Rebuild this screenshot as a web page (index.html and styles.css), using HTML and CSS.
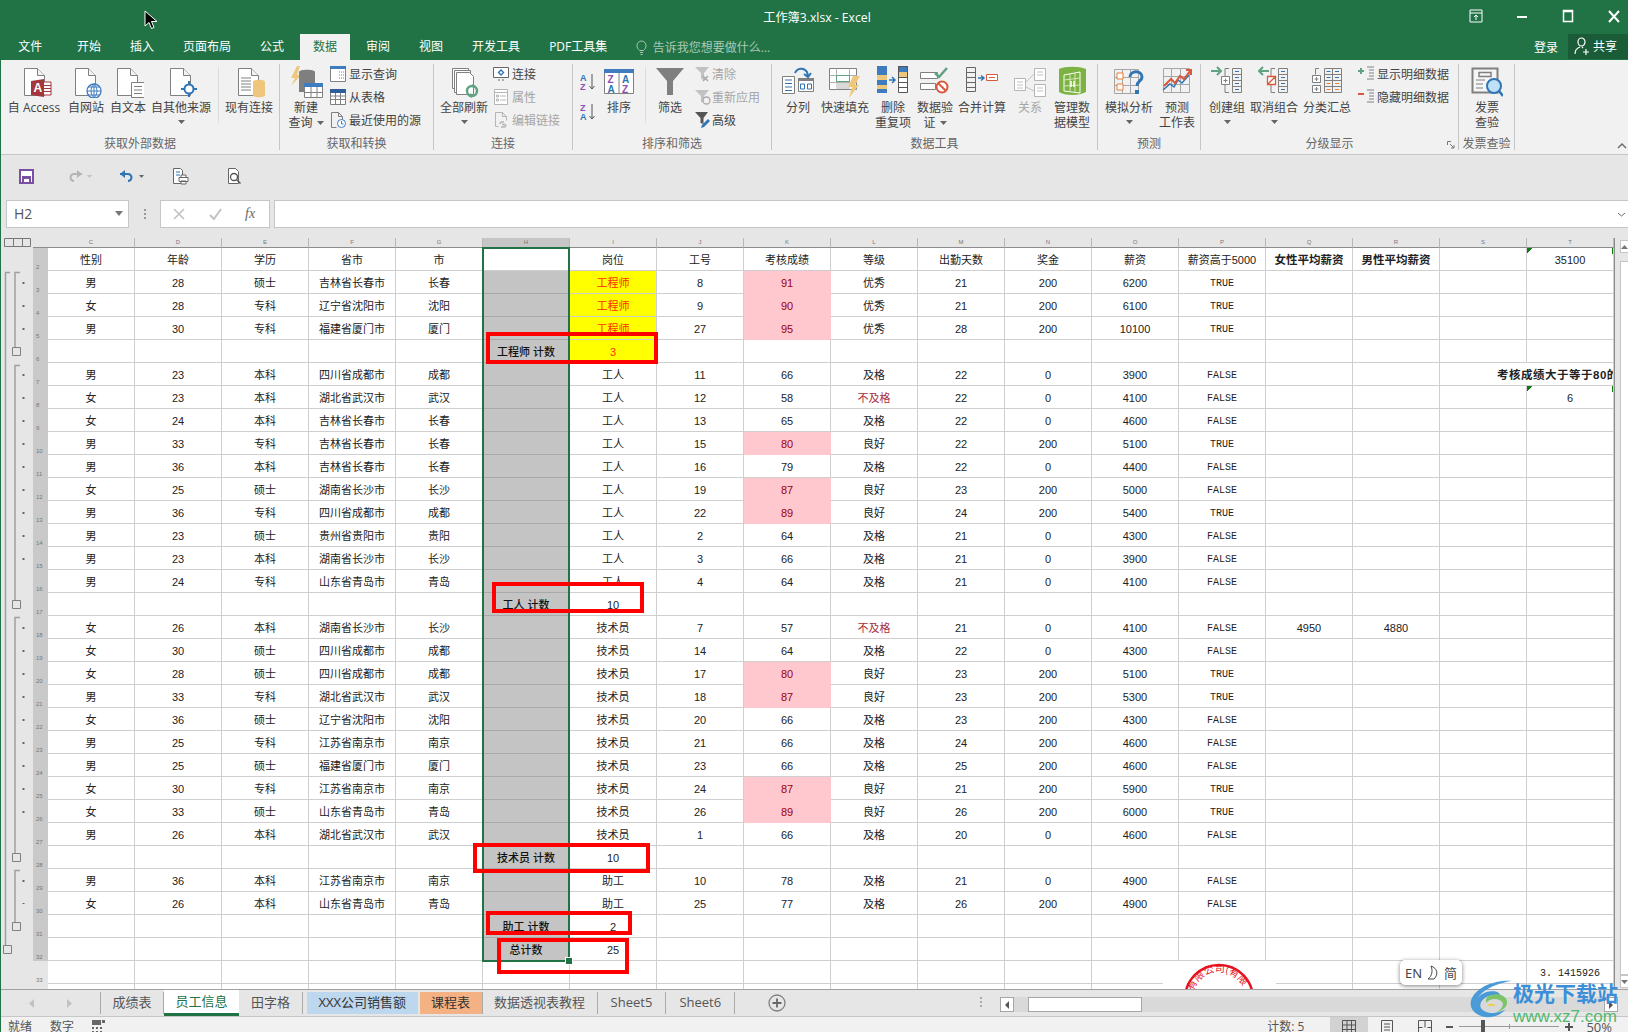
FILE: index.html
```html
<!DOCTYPE html>
<html lang="zh-CN">
<head>
    <meta charset="UTF-8">
    <title>工作簿3.xlsx - Excel</title>
    <link rel="stylesheet" href="styles.css">
</head>
<body>
<svg class="defs" width="0" height="0">
    <symbol id="doc" viewBox="0 0 21 28"><path d="M.5.5h13l7 7v20H.5z" fill="#fff" stroke="#808080"/><path d="M13.5.5v7h7" fill="#f2f2f2" stroke="#808080"/></symbol>
    <symbol id="caret" viewBox="0 0 7 4"><path d="M0 0h7L3.500 4z" fill="#666"/></symbol>
</svg>
<div class="app">
    <div class="titlebar">
        <div></div>
        <div class="title">工作簿3.xlsx - Excel</div>
        <div class="winctl">
            <svg width="14" height="14" viewBox="0 0 14 14"><path d="M1 1h12v12H1zM1 4h12M7 11V6M5 8l2-2 2 2" fill="none" stroke="#fff"/></svg>
            <svg width="14" height="14" viewBox="0 0 14 14"><path d="M2 8h10" stroke="#fff" stroke-width="2"/></svg>
            <svg width="14" height="14" viewBox="0 0 14 14"><path d="M2.500 1.500h9v11h-9zM2.500 2.500h9" fill="none" stroke="#fff" stroke-width="1.500"/></svg>
            <svg width="14" height="14" viewBox="0 0 14 14"><path d="M2 2l10 11M12 2L2 13" stroke="#fff" stroke-width="2"/></svg>
        </div>
    </div>
    <div class="tabs">
        <div class="tab tab-file">文件</div>
        <div class="tab">开始</div>
        <div class="tab">插入</div>
        <div class="tab">页面布局</div>
        <div class="tab">公式</div>
        <div class="tab active">数据</div>
        <div class="tab">审阅</div>
        <div class="tab">视图</div>
        <div class="tab">开发工具</div>
        <div class="tab">PDF工具集</div>
        <div class="tell">
            <svg width="11" height="15" viewBox="0 0 11 15"><path d="M3.500 10.500C2 9 1 8 1 5.500a4.500 4.500 0 0 1 9 0C10 8 9 9 7.500 10.500zM4 12.500h3M4.500 14.500h2" fill="none" stroke="#a9c9b6"/></svg>
            告诉我您想要做什么...
        </div>
        <div class="login">登录</div>
        <div class="share">
            <svg width="16" height="18" viewBox="0 0 16 18"><path d="M4 5a3.500 4 0 1 1 7 0 3.500 4 0 0 1-7 0zM1 17c0-4 2-6 5-7M8 10l1 1M9 15h6M12 12v6" fill="none" stroke="#fff" stroke-width="1.200"/></svg>
            共享
        </div>
    </div>

    <div class="ribbon">
        <div class="rb-group">
            <div class="rb-body pl3">
                <div class="rb-btn w60">
                    <svg class="rb-icon" width="36" height="32" viewBox="0 0 36 32"><use href="#doc" x="8" y="2" width="21" height="28"/><path d="M26 16h9v13h-9z" fill="#fff" stroke="#a4373a"/><path d="M26 19.500h9M26 22.500h9M26 25.500h9" stroke="#a4373a"/><path d="M15 15l13-2v18l-13-2z" fill="#a4373a"/><text x="17.500" y="26" class="svg-a">A</text></svg>
                    <span>自 Access</span>
                </div>
                <div class="rb-btn w44">
                    <svg class="rb-icon" width="32" height="32" viewBox="0 0 32 32"><use href="#doc" x="5" y="2" width="21" height="28"/><circle cx="24" cy="25" r="7" fill="#fff" stroke="#3f7cbf" stroke-width="1.300"/><path d="M17 25h14M24 18v14M18.500 21h11M18.500 29h11M24 18c-4 4-4 10 0 14M24 18c4 4 4 10 0 14" fill="none" stroke="#3f7cbf"/></svg>
                    <span>自网站</span>
                </div>
                <div class="rb-btn w40">
                    <svg class="rb-icon" width="32" height="32" viewBox="0 0 32 32"><use href="#doc" x="5" y="2" width="21" height="28"/><path d="M19.500 16.500h13v15h-13z" fill="#fff" stroke="#808080"/><path d="M22 20.500h8M22 24h8M22 27.500h8" stroke="#808080"/></svg>
                    <span>自文本</span>
                </div>
                <div class="rb-btn w66">
                    <svg class="rb-icon" width="32" height="32" viewBox="0 0 32 32"><use href="#doc" x="5" y="2" width="21" height="28"/><circle cx="24" cy="23" r="4.500" fill="#fff" stroke="#2f75b5" stroke-width="2"/><path d="M24 15v4M24 27v4M16 23h4M28 23h4" stroke="#2f75b5" stroke-width="2"/></svg>
                    <span>自其他来源</span>
                    <svg class="rb-caret" width="7" height="4"><use href="#caret"/></svg>
                </div>
                <div class="rb-sep"></div>
                <div class="rb-btn w60">
                    <svg class="rb-icon" width="32" height="32" viewBox="0 0 32 32"><use href="#doc" x="5" y="2" width="21" height="28"/><path d="M8 12h10M8 15h10M8 18h10M8 21h10M8 24h10" stroke="#808080"/><path d="M20 16c0-3 12-3 12 0v13c0 3-12 3-12 0z" fill="#efc77c"/></svg>
                    <span>现有连接</span>
                </div>
            </div>
            <div class="rb-title">获取外部数据</div>
        </div>

        <div class="rb-group">
            <div class="rb-body pl2">
                <div class="rb-btn w48">
                    <svg class="rb-icon" width="34" height="32" viewBox="0 0 34 32"><path d="M8 0L2 12h4L2 20l10-11H8l3-9z" fill="#efc77c"/><path d="M10 6c0-3 16-3 16 0v20H10z" fill="#7f7f7f"/><path d="M15.500 17.500h18v14h-18z" fill="#fff" stroke="#808080"/><path d="M15 17h19v4H15z" fill="#3f7cbf"/><path d="M15.500 26.500h18M22 21v10M28 21v10" stroke="#808080"/></svg>
                    <span>新建</span>
                    <span>查询<svg class="cap" width="7" height="4"><use href="#caret"/></svg></span>
                </div>
                <div class="rb-col w103">
                    <div class="rb-row"><svg width="16" height="16" viewBox="0 0 16 16"><path d="M.5.500h15v15H.5z" fill="#fff" stroke="#808080"/><path d="M0 0h16v3H0z" fill="#3f7cbf"/><path d="M9 6h5M9 9h5M9 12h5" stroke="#808080" stroke-dasharray="1 1"/></svg>显示查询</div>
                    <div class="rb-row"><svg width="16" height="16" viewBox="0 0 16 16"><path d="M.5.500h15v15H.5z" fill="#fff" stroke="#808080"/><path d="M0 0h16v4H0z" fill="#2f5f99"/><path d="M1 7h14M1 10.500h14M5.500 4v11M10.500 4v11" stroke="#808080"/></svg>从表格</div>
                    <div class="rb-row"><svg width="16" height="16" viewBox="0 0 16 16"><path d="M1.500.500h7l4 4v5M1.500.500v15h5M8.500.500v4h4" fill="none" stroke="#808080"/><circle cx="11.500" cy="11.500" r="4" fill="#fff" stroke="#3f7cbf"/><path d="M11.500 9v3h2" fill="none" stroke="#3f7cbf"/></svg>最近使用的源</div>
                </div>
            </div>
            <div class="rb-title">获取和转换</div>
        </div>

        <div class="rb-group">
            <div class="rb-body pl1">
                <div class="rb-btn w58">
                    <svg class="rb-icon" width="32" height="32" viewBox="0 0 32 32"><path d="M4.500 2.500h16v20h-16z" fill="#fff" stroke="#808080"/><path d="M6.500 4.500h16v22h-16z" fill="#fff" stroke="#808080"/><path d="M8.500 6.500h13l4 4v18h-17z" fill="#fff" stroke="#808080"/><circle cx="24" cy="25" r="5" fill="none" stroke="#5fa383" stroke-width="2.500"/><path d="M24 18l4 2-3 3zM24 32l-4-2 3-3z" fill="#5fa383"/></svg>
                    <span>全部刷新</span>
                    <svg class="rb-caret" width="7" height="4"><use href="#caret"/></svg>
                </div>
                <div class="rb-col w79">
                    <div class="rb-row"><svg width="16" height="16" viewBox="0 0 16 16"><path d="M.5 1.500h15v10H.5z" fill="#fff" stroke="#666"/><path d="M8 4l2.500 2.500L8 9 5.500 6.500z" fill="none" stroke="#2f75b5" stroke-width="1.400"/><path d="M5 14h2M9 14h2" stroke="#666"/></svg>连接</div>
                    <div class="rb-row off"><svg width="16" height="16" viewBox="0 0 16 16"><path d="M1.500.500h13v15h-13z" fill="#fff" stroke="#b5b5b5"/><path d="M1 3.500h14M7 7h6M7 11h6M3.500 6h2v2h-2zM3.500 10h2v2h-2z" fill="none" stroke="#b5b5b5"/></svg>属性</div>
                    <div class="rb-row off"><svg width="16" height="16" viewBox="0 0 16 16"><path d="M2.500.500h7l4 4v4M2.500.500v14h3M9.500.500v4h4" fill="none" stroke="#b5b5b5"/><path d="M7 12a2 2 0 0 1 2-2h2M8 15h3a2 2 0 0 0 2-2M9 12.500h4" fill="none" stroke="#b5b5b5" stroke-width="1.300"/></svg>编辑链接</div>
                </div>
            </div>
            <div class="rb-title">连接</div>
        </div>

        <div class="rb-group">
            <div class="rb-body pl1">
                <div class="rb-sort">
                    <svg width="16" height="18" viewBox="0 0 16 18"><text x="0" y="8" class="svg-l blue">A</text><text x="0" y="17" class="svg-l violet">Z</text><path d="M12 1v15M9.500 13l2.500 3 2.500-3" fill="none" stroke="#555"/></svg>
                    <svg width="16" height="18" viewBox="0 0 16 18"><text x="0" y="8" class="svg-l violet">Z</text><text x="0" y="17" class="svg-l blue">A</text><path d="M12 1v15M9.500 13l2.500 3 2.500-3" fill="none" stroke="#555"/></svg>
                </div>
                <div class="rb-btn w34">
                    <svg class="rb-icon" width="30" height="32" viewBox="0 0 30 32"><path d="M.5 3.500h29v24H.5z" fill="#fff" stroke="#808080"/><path d="M0 3h30v4H0z" fill="#3f7cbf"/><path d="M15 7v21" stroke="#808080"/><text x="3.500" y="17" class="svg-m violet">Z</text><text x="18" y="17" class="svg-m blue">A</text><text x="3.500" y="27" class="svg-m blue">A</text><text x="18" y="27" class="svg-m violet">Z</text></svg>
                    <span>排序</span>
                </div>
                <div class="rb-sep ml9"></div>
                <div class="rb-btn w48">
                    <svg class="rb-icon" width="30" height="32" viewBox="0 0 30 32"><path d="M1 2h28L18 15v14h-6V15z" fill="#7f7f7f"/></svg>
                    <span>筛选</span>
                </div>
                <div class="rb-col w77">
                    <div class="rb-row off tight"><svg width="18" height="18" viewBox="0 0 18 18"><path d="M1 2h14L10 8v7l-3-1V8z" fill="#c2c2c2"/><path d="M9 11l5 5M14 11l-5 5" stroke="#a8a8a8" stroke-width="1.500"/></svg>清除</div>
                    <div class="rb-row off tight"><svg width="18" height="18" viewBox="0 0 18 18"><path d="M1 2h14L10 8v7l-3-1V8z" fill="#c2c2c2"/><circle cx="12.500" cy="12.500" r="3.500" fill="#f1f1f1" stroke="#a8a8a8" stroke-width="1.300"/></svg>重新应用</div>
                    <div class="rb-row tight"><svg width="18" height="18" viewBox="0 0 18 18"><path d="M1 1h13L9.500 7v6l-3-1V7z" fill="#555"/><path d="M7 17l1-3 6-6 2 2-6 6z" fill="#2f75b5"/></svg>高级</div>
                </div>
            </div>
            <div class="rb-title">排序和筛选</div>
        </div>

        <div class="rb-group">
            <div class="rb-body pl1">
                <div class="rb-btn w50">
                    <svg class="rb-icon" width="32" height="32" viewBox="0 0 32 32"><path d="M.5 10.500h12v17H.5z" fill="#fff" stroke="#808080"/><path d="M3 14h7M3 17.500h7M3 21h7M3 24.500h7" stroke="#2f75b5"/><path d="M16.500 12.500h15v13h-15z" fill="#fff" stroke="#808080"/><path d="M16 12h16v3H16z" fill="#808080"/><path d="M18.500 18h4v5h-4zM25.500 18h4v5h-4z" fill="none" stroke="#2f75b5"/><path d="M13 7c2-5 9-6 12-1l1 4M22 8l4 3 3-4" fill="none" stroke="#2f75b5" stroke-width="2"/></svg>
                    <span>分列</span>
                </div>
                <div class="rb-btn w44">
                    <svg class="rb-icon" width="32" height="32" viewBox="0 0 32 32"><path d="M.5 2.500h27v21H.5z" fill="#fff" stroke="#808080"/><path d="M.5 9.500h27M.5 16.500h27M7.500 2.500v21M20.500 2.500v21" stroke="#b0b0b0"/><path d="M7.500 9.500h13v6h-13z" fill="#fff" stroke="#5fa383"/><path d="M7 17h14v6H7z" fill="#d9d9d9"/><path d="M24 10h7l-5 9h4L20 32l3-11h-4z" fill="#efc77c"/></svg>
                    <span>快速填充</span>
                </div>
                <div class="rb-btn w52">
                    <svg class="rb-icon" width="32" height="32" viewBox="0 0 32 32"><path d="M0 0h10v27H0z" fill="#3f7cbf"/><path d="M0 9h10v5H0zM0 19h10v4H0z" fill="#efc77c"/><path d="M21 0h10v27H21z" fill="#fff"/><path d="M21 0h10v6H21z" fill="#3f7cbf"/><path d="M21 6h10v5H21z" fill="#efc77c"/><path d="M21.500.5h9v26h-9zM21.500 11.500h9M21.500 16.500h9M21.500 21.500h9" fill="none" stroke="#555"/><path d="M12 14h5M15 11l3 3-3 3" fill="none" stroke="#2f75b5" stroke-width="1.500"/></svg>
                    <span>删除</span><span>重复项</span>
                </div>
                <div class="rb-btn w32">
                    <svg class="rb-icon" width="30" height="32" viewBox="0 0 30 32"><path d="M.5 6.500h17v6H.5zM.5 17.500h15v6H.5z" fill="#fff" stroke="#808080"/><path d="M15 7l4 4 8-9" fill="none" stroke="#5fa383" stroke-width="2.500"/><circle cx="22" cy="21" r="5.500" fill="#fff" stroke="#d9593d" stroke-width="2"/><path d="M18 17l8 8" stroke="#d9593d" stroke-width="2"/></svg>
                    <span>数据验</span><span>证<svg class="cap" width="7" height="4"><use href="#caret"/></svg></span>
                </div>
                <div class="rb-btn w62">
                    <svg class="rb-icon" width="32" height="32" viewBox="0 0 32 32"><path d="M.5 1.500h9v24h-9zM.5 6.500h9M.5 11.500h9M.5 16.500h9M.5 21.500h9" fill="none" stroke="#666"/><path d="M12 12h5M15 9.500l3 2.500-3 2.500" fill="none" stroke="#2f75b5" stroke-width="1.500"/><path d="M20.500 8.500h11v6h-11z" fill="#fff" stroke="#d9593d"/><path d="M23 11.500h6" stroke="#d9593d"/></svg>
                    <span>合并计算</span>
                </div>
                <div class="rb-btn w34 off">
                    <svg class="rb-icon" width="32" height="32" viewBox="0 0 32 32"><path d="M.5 12.500h11v12H.5zM20.500 2.500h11v12h-11zM20.500 18.500h11v12h-11z" fill="#fff" stroke="#b5b5b5"/><path d="M12 16l8-8M12 21l8 4M3 16h6M3 19h6M3 22h6M23 6h6M23 9h6M23 22h6M23 25h6" stroke="#c2c2c2"/></svg>
                    <span>关系</span>
                </div>
                <div class="rb-btn w50">
                    <svg class="rb-icon" width="32" height="32" viewBox="0 0 32 32"><path d="M3 3c6-3 20-3 27 0v23c-7 4-21 4-27 0z" fill="#7cb342"/><path d="M8 9l16-3v21L8 25z" fill="none" stroke="#fff"/><path d="M14 8v18M19 7v20M8 14l16-2M8 20l16-1" stroke="#d5e8b8"/><path d="M15 21v-6M18 15v6" stroke="#fff" stroke-width="1.500"/></svg>
                    <span>管理数</span><span>据模型</span>
                </div>
            </div>
            <div class="rb-title">数据工具</div>
        </div>

        <div class="rb-group">
            <div class="rb-body pl1 pr5">
                <div class="rb-btn w60">
                    <svg class="rb-icon" width="32" height="32" viewBox="0 0 32 32"><path d="M1.500 3.500h24v24h-24zM1.500 11.500h24M1.500 19.500h24M9.500 3.500v24M17.500 3.500v24" fill="none" stroke="#a6a6a6"/><path d="M4 7h6v6H4zM4 18h6v6H4z" fill="#fff" stroke="#ed7d31"/><path d="M17 11c0-7 12-7 12 0 0 4-5 4-5 9" fill="none" stroke="#2f75b5" stroke-width="3"/><path d="M22 24h4v4h-4z" fill="#2f75b5"/></svg>
                    <span>模拟分析</span>
                    <svg class="rb-caret" width="7" height="4"><use href="#caret"/></svg>
                </div>
                <div class="rb-btn w36">
                    <svg class="rb-icon" width="30" height="32" viewBox="0 0 30 32"><path d="M1.500 2.500h26v24h-26zM1.500 10.500h26M1.500 18.500h26M9.500 2.500v24M18.500 2.500v24" fill="none" stroke="#a6a6a6"/><path d="M1 24l7-6 4 3 4-7 4 3 7-8" fill="none" stroke="#2f75b5" stroke-width="1.500"/><path d="M2 20l7-7 4 4 5-7 4 3 6-8M24 4h5v5" fill="none" stroke="#d9593d" stroke-width="2"/></svg>
                    <span>预测</span><span>工作表</span>
                </div>
            </div>
            <div class="rb-title">预测</div>
        </div>

        <div class="rb-group has-launcher">
            <div class="rb-body pl1">
                <div class="rb-btn w50">
                    <svg class="rb-icon" width="32" height="32" viewBox="0 0 32 32"><path d="M0 5h9M6 1l4 4-4 4" fill="none" stroke="#5fa383" stroke-width="2"/><path d="M21.500 2.500h9v24h-9zM21.500 8.500h9M21.500 14.500h9M21.500 20.500h9" fill="none" stroke="#808080"/><path d="M24 5.500h4M24 11.500h4M24 17.500h4M24 23.500h4" stroke="#2f75b5"/><path d="M18 2.500h-4v8M18 26.500h-4v-8" fill="none" stroke="#808080"/><path d="M10.500 10.500h8v8h-8zM12.500 14.500h4M14.500 12.500v4" fill="#fff" stroke="#808080"/></svg>
                    <span>创建组</span>
                    <svg class="rb-caret" width="7" height="4"><use href="#caret"/></svg>
                </div>
                <div class="rb-btn w44">
                    <svg class="rb-icon" width="32" height="32" viewBox="0 0 32 32"><path d="M11 5H2M5 1L1 5l4 4" fill="none" stroke="#5fa383" stroke-width="2"/><path d="M20.500 2.500h9v24h-9zM20.500 8.500h9M20.500 14.500h9M20.500 20.500h9" fill="none" stroke="#808080"/><path d="M23 5.500h4M23 11.500h4M23 17.500h4M23 23.500h4" stroke="#2f75b5"/><path d="M17 2.500h-4v8M17 26.500h-4v-8" fill="none" stroke="#808080"/><path d="M9.500 10.500h8v8h-8zM10 18l7-7" fill="#fff" stroke="#d9593d" stroke-width="1.300"/></svg>
                    <span>取消组合</span>
                    <svg class="rb-caret" width="7" height="4"><use href="#caret"/></svg>
                </div>
                <div class="rb-btn w62">
                    <svg class="rb-icon" width="32" height="32" viewBox="0 0 32 32"><path d="M13.500 2.500h17v24h-17zM13.500 8.500h17M13.500 14.500h17M13.500 20.500h17M21.500 2.500v24" fill="none" stroke="#808080"/><path d="M15.500 11.500h4M24 11.500h4M15.500 5.500h4M24 5.500h4" stroke="#2f75b5"/><path d="M15.500 17.500h4M24 17.500h4M15.500 23.500h4M24 23.500h4" stroke="#ed7d31"/><path d="M8 2.500H4.500v6M4.500 19v7.500" fill="none" stroke="#808080"/><path d="M1.500 9.500h8v7h-8zM1.500 19.500h8v7h-8zM3.500 13h4M5.500 11v4M3.500 23h4M5.500 21v4" fill="#fff" stroke="#808080"/></svg>
                    <span>分类汇总</span>
                </div>
                <div class="rb-col w100">
                    <div class="rb-row"><svg width="16" height="16" viewBox="0 0 16 16"><path d="M0 5h6M3 2v6" stroke="#5fa383" stroke-width="2"/><path d="M9 1h7M11 4h5M11 7h5M11 10h5M9 13h7" stroke="#808080"/></svg>显示明细数据</div>
                    <div class="rb-row"><svg width="16" height="16" viewBox="0 0 16 16"><path d="M0 5h6" stroke="#d9593d" stroke-width="2"/><path d="M9 1h7M11 4h5M11 7h5M11 10h5M9 13h7" stroke="#808080"/></svg>隐藏明细数据</div>
                </div>
            </div>
            <div class="rb-title">分级显示</div>
            <svg class="launcher" width="8" height="8" viewBox="0 0 8 8"><path d="M.5 4V.5H4M3 3l4 4M7 4v3H4" fill="none" stroke="#777"/></svg>
        </div>

        <div class="rb-group">
            <div class="rb-body pl1">
                <div class="rb-btn w54">
                    <svg class="rb-icon" width="32" height="32" viewBox="0 0 32 32"><path d="M1.500 2.500h25v24h-25z" fill="#f5f5f5" stroke="#808080" stroke-width="2"/><path d="M8 6.500h12v4H8z" fill="none" stroke="#808080" stroke-width="1.500"/><path d="M5 14h9M5 18h7M5 22h7" stroke="#808080"/><circle cx="23" cy="20" r="7" fill="#bfe0f5" stroke="#2f75b5" stroke-width="2"/><path d="M28 25l4 5" stroke="#2f75b5" stroke-width="2.500"/></svg>
                    <span>发票</span><span>查验</span>
                </div>
            </div>
            <div class="rb-title">发票查验</div>
        </div>
        <svg class="collapse" width="10" height="6" viewBox="0 0 10 6"><path d="M1 5l4-4 4 4" fill="none" stroke="#666" stroke-width="1.300"/></svg>
    </div>

    <div class="qat">
        <svg class="q-save" width="15" height="15" viewBox="0 0 15 15"><path d="M1 1h13v13H1z" fill="#fff" stroke="#7b4fa3" stroke-width="2"/><path d="M3 7h9v7H3z" fill="#7b4fa3"/><path d="M5 10h5v3H5z" fill="#fff"/></svg>
        <svg class="q-redo" width="24" height="14" viewBox="0 0 24 14"><path d="M14 5H6a3 3 0 0 0 0 7" fill="none" stroke="#b5b5b5" stroke-width="2"/><path d="M9 1l5 4-5 4z" fill="#b5b5b5"/><path d="M19 6h5l-2.500 3z" fill="#c2c2c2"/></svg>
        <svg class="q-undo" width="26" height="14" viewBox="0 0 26 14"><path d="M2 5h8a3 3 0 0 1 0 7" fill="none" stroke="#2f75b5" stroke-width="2"/><path d="M7 1L2 5l5 4z" fill="#2f75b5"/><path d="M21 6h5l-2.500 3z" fill="#666"/></svg>
        <svg class="q-prev" width="17" height="17" viewBox="0 0 17 17"><path d="M1.500.500h7l2 2v13h-9z" fill="#fff" stroke="#666"/><path d="M4 4h4M4 7h4" stroke="#2f75b5"/><path d="M7 9.500h9v4H7zM9 9V7h5v2M9 13h5v3H9z" fill="#fff" stroke="#666"/></svg>
        <svg class="q-zoom" width="15" height="17" viewBox="0 0 15 17"><path d="M1.500.500h7l3 3v12h-10z" fill="#fff" stroke="#666"/><circle cx="7" cy="9" r="3.500" fill="none" stroke="#555" stroke-width="1.300"/><path d="M9.500 11.500l4 4" stroke="#555" stroke-width="1.500"/></svg>
    </div>

    <div class="fbar">
        <div class="namebox">H2<svg width="8" height="5"><path d="M0 0h8L4 5z" fill="#777"/></svg></div>
        <div class="fdots"></div>
        <div class="fbtns">
            <svg width="14" height="14" viewBox="0 0 14 14"><path d="M2 2l10 10M12 2L2 12" stroke="#c2c2c2" stroke-width="1.600"/></svg>
            <svg width="15" height="14" viewBox="0 0 15 14"><path d="M2 8l4 4 7-10" fill="none" stroke="#c2c2c2" stroke-width="2"/></svg>
            <span class="fx">fx</span>
        </div>
        <div class="finput"><svg width="9" height="5" viewBox="0 0 9 5"><path d="M1 1l3.500 3L8 1" fill="none" stroke="#666"/></svg></div>
    </div>

    <div class="sheet">
        <div class="gutter">
            <svg width="32" height="751" viewBox="0 0 32 751">
                <path d="M3.500.5h9v8h-9zM12.500.5h9v8h-9zM21.500.5h8v8h-8z" fill="#e6e6e6" stroke="#777"/>
                <g fill="none" stroke="#a0a0a0" stroke-width="1.500">
                    <path d="M9 34.500H4.500V707"/>
                    <path d="M19 34.500h-5V109M19 127.500h-5V362M19 379.500h-5V615M19 632.500h-5V684"/>
                </g>
                <g fill="#e6e6e6" stroke="#808080">
                    <path d="M11.500 109.500h8v8h-8zM11.500 362.500h8v8h-8zM11.500 615.500h8v8h-8zM11.500 684.500h8v8h-8zM2.500 707.500h8v8h-8z"/>
                </g>
                <path d="M22.500 44V92M22.500 136V343M22.500 389V596M22.500 642V666" fill="none" stroke="#666" stroke-width="2" stroke-dasharray="2 21"/>
            </svg>
        </div>
        <div class="grid-wrap">
            <table class="grid">
                <thead>
                    <tr><th class="corner"></th><th>C</th><th>D</th><th>E</th><th>F</th><th>G</th><th class="sel">H</th><th>I</th><th>J</th><th>K</th><th>L</th><th>M</th><th>N</th><th>O</th><th>P</th><th>Q</th><th>R</th><th>S</th><th>T</th></tr>
                </thead>
                <tbody>
                    <tr><th>2</th><td>性别</td><td>年龄</td><td>学历</td><td>省市</td><td>市</td><td></td><td>岗位</td><td>工号</td><td>考核成绩</td><td>等级</td><td>出勤天数</td><td>奖金</td><td>薪资</td><td>薪资高于5000</td><td class="b">女性平均薪资</td><td class="b">男性平均薪资</td><td></td><td class="flag">35100</td></tr>
                    <tr><th>3</th><td>男</td><td>28</td><td>硕士</td><td>吉林省长春市</td><td>长春</td><td class="h"></td><td class="y">工程师</td><td>8</td><td class="p">91</td><td>优秀</td><td>21</td><td>200</td><td>6200</td><td class="m">TRUE</td><td></td><td></td><td></td><td></td></tr>
                    <tr><th>4</th><td>女</td><td>28</td><td>专科</td><td>辽宁省沈阳市</td><td>沈阳</td><td class="h"></td><td class="y">工程师</td><td>9</td><td class="p">90</td><td>优秀</td><td>21</td><td>200</td><td>6100</td><td class="m">TRUE</td><td></td><td></td><td></td><td></td></tr>
                    <tr><th>5</th><td>男</td><td>30</td><td>专科</td><td>福建省厦门市</td><td>厦门</td><td class="h"></td><td class="y">工程师</td><td>27</td><td class="p">95</td><td>优秀</td><td>28</td><td>200</td><td>10100</td><td class="m">TRUE</td><td></td><td></td><td></td><td></td></tr>
                    <tr><th>6</th><td></td><td></td><td></td><td></td><td></td><td class="h s">工程师 计数</td><td class="y">3</td><td></td><td></td><td></td><td></td><td></td><td></td><td></td><td></td><td></td><td></td><td></td></tr>
                    <tr><th>7</th><td>男</td><td>23</td><td>本科</td><td>四川省成都市</td><td>成都</td><td class="h"></td><td>工人</td><td>11</td><td>66</td><td>及格</td><td>22</td><td>0</td><td>3900</td><td class="m">FALSE</td><td></td><td></td><td class="b spill" colspan="2">考核成绩大于等于80的</td></tr>
                    <tr><th>8</th><td>女</td><td>23</td><td>本科</td><td>湖北省武汉市</td><td>武汉</td><td class="h"></td><td>工人</td><td>12</td><td>58</td><td class="f">不及格</td><td>22</td><td>0</td><td>4100</td><td class="m">FALSE</td><td></td><td></td><td></td><td class="flag">6</td></tr>
                    <tr><th>9</th><td>女</td><td>24</td><td>本科</td><td>吉林省长春市</td><td>长春</td><td class="h"></td><td>工人</td><td>13</td><td>65</td><td>及格</td><td>22</td><td>0</td><td>4600</td><td class="m">FALSE</td><td></td><td></td><td></td><td></td></tr>
                    <tr><th>10</th><td>男</td><td>33</td><td>专科</td><td>吉林省长春市</td><td>长春</td><td class="h"></td><td>工人</td><td>15</td><td class="p">80</td><td>良好</td><td>22</td><td>200</td><td>5100</td><td class="m">TRUE</td><td></td><td></td><td></td><td></td></tr>
                    <tr><th>11</th><td>男</td><td>36</td><td>本科</td><td>吉林省长春市</td><td>长春</td><td class="h"></td><td>工人</td><td>16</td><td>79</td><td>及格</td><td>22</td><td>0</td><td>4400</td><td class="m">FALSE</td><td></td><td></td><td></td><td></td></tr>
                    <tr><th>12</th><td>女</td><td>25</td><td>硕士</td><td>湖南省长沙市</td><td>长沙</td><td class="h"></td><td>工人</td><td>19</td><td class="p">87</td><td>良好</td><td>23</td><td>200</td><td>5000</td><td class="m">FALSE</td><td></td><td></td><td></td><td></td></tr>
                    <tr><th>13</th><td>男</td><td>36</td><td>专科</td><td>四川省成都市</td><td>成都</td><td class="h"></td><td>工人</td><td>22</td><td class="p">89</td><td>良好</td><td>24</td><td>200</td><td>5400</td><td class="m">TRUE</td><td></td><td></td><td></td><td></td></tr>
                    <tr><th>14</th><td>男</td><td>23</td><td>硕士</td><td>贵州省贵阳市</td><td>贵阳</td><td class="h"></td><td>工人</td><td>2</td><td>64</td><td>及格</td><td>21</td><td>0</td><td>4300</td><td class="m">FALSE</td><td></td><td></td><td></td><td></td></tr>
                    <tr><th>15</th><td>男</td><td>23</td><td>本科</td><td>湖南省长沙市</td><td>长沙</td><td class="h"></td><td>工人</td><td>3</td><td>66</td><td>及格</td><td>21</td><td>0</td><td>3900</td><td class="m">FALSE</td><td></td><td></td><td></td><td></td></tr>
                    <tr><th>16</th><td>男</td><td>24</td><td>专科</td><td>山东省青岛市</td><td>青岛</td><td class="h"></td><td>工人</td><td>4</td><td>64</td><td>及格</td><td>21</td><td>0</td><td>4100</td><td class="m">FALSE</td><td></td><td></td><td></td><td></td></tr>
                    <tr><th>17</th><td></td><td></td><td></td><td></td><td></td><td class="h s">工人 计数</td><td>10</td><td></td><td></td><td></td><td></td><td></td><td></td><td></td><td></td><td></td><td></td><td></td></tr>
                    <tr><th>18</th><td>女</td><td>26</td><td>本科</td><td>湖南省长沙市</td><td>长沙</td><td class="h"></td><td>技术员</td><td>7</td><td>57</td><td class="f">不及格</td><td>21</td><td>0</td><td>4100</td><td class="m">FALSE</td><td>4950</td><td>4880</td><td></td><td></td></tr>
                    <tr><th>19</th><td>女</td><td>30</td><td>硕士</td><td>四川省成都市</td><td>成都</td><td class="h"></td><td>技术员</td><td>14</td><td>64</td><td>及格</td><td>22</td><td>0</td><td>4300</td><td class="m">FALSE</td><td></td><td></td><td></td><td></td></tr>
                    <tr><th>20</th><td>女</td><td>28</td><td>硕士</td><td>四川省成都市</td><td>成都</td><td class="h"></td><td>技术员</td><td>17</td><td class="p">80</td><td>良好</td><td>23</td><td>200</td><td>5100</td><td class="m">TRUE</td><td></td><td></td><td></td><td></td></tr>
                    <tr><th>21</th><td>男</td><td>33</td><td>专科</td><td>湖北省武汉市</td><td>武汉</td><td class="h"></td><td>技术员</td><td>18</td><td class="p">87</td><td>良好</td><td>23</td><td>200</td><td>5300</td><td class="m">TRUE</td><td></td><td></td><td></td><td></td></tr>
                    <tr><th>22</th><td>女</td><td>36</td><td>硕士</td><td>辽宁省沈阳市</td><td>沈阳</td><td class="h"></td><td>技术员</td><td>20</td><td>66</td><td>及格</td><td>23</td><td>200</td><td>4300</td><td class="m">FALSE</td><td></td><td></td><td></td><td></td></tr>
                    <tr><th>23</th><td>男</td><td>25</td><td>专科</td><td>江苏省南京市</td><td>南京</td><td class="h"></td><td>技术员</td><td>21</td><td>66</td><td>及格</td><td>24</td><td>200</td><td>4600</td><td class="m">FALSE</td><td></td><td></td><td></td><td></td></tr>
                    <tr><th>24</th><td>男</td><td>25</td><td>硕士</td><td>福建省厦门市</td><td>厦门</td><td class="h"></td><td>技术员</td><td>23</td><td>66</td><td>及格</td><td>25</td><td>200</td><td>4600</td><td class="m">FALSE</td><td></td><td></td><td></td><td></td></tr>
                    <tr><th>25</th><td>女</td><td>30</td><td>专科</td><td>江苏省南京市</td><td>南京</td><td class="h"></td><td>技术员</td><td>24</td><td class="p">87</td><td>良好</td><td>21</td><td>200</td><td>5900</td><td class="m">TRUE</td><td></td><td></td><td></td><td></td></tr>
                    <tr><th>26</th><td>女</td><td>33</td><td>硕士</td><td>山东省青岛市</td><td>青岛</td><td class="h"></td><td>技术员</td><td>26</td><td class="p">89</td><td>良好</td><td>26</td><td>200</td><td>6000</td><td class="m">TRUE</td><td></td><td></td><td></td><td></td></tr>
                    <tr><th>27</th><td>男</td><td>26</td><td>本科</td><td>湖北省武汉市</td><td>武汉</td><td class="h"></td><td>技术员</td><td>1</td><td>66</td><td>及格</td><td>20</td><td>0</td><td>4600</td><td class="m">FALSE</td><td></td><td></td><td></td><td></td></tr>
                    <tr><th>28</th><td></td><td></td><td></td><td></td><td></td><td class="h s">技术员 计数</td><td>10</td><td></td><td></td><td></td><td></td><td></td><td></td><td></td><td></td><td></td><td></td><td></td></tr>
                    <tr><th>29</th><td>男</td><td>36</td><td>本科</td><td>江苏省南京市</td><td>南京</td><td class="h"></td><td>助工</td><td>10</td><td>78</td><td>及格</td><td>21</td><td>0</td><td>4900</td><td class="m">FALSE</td><td></td><td></td><td></td><td></td></tr>
                    <tr><th>30</th><td>女</td><td>26</td><td>本科</td><td>山东省青岛市</td><td>青岛</td><td class="h"></td><td>助工</td><td>25</td><td>77</td><td>及格</td><td>26</td><td>200</td><td>4900</td><td class="m">FALSE</td><td></td><td></td><td></td><td></td></tr>
                    <tr><th>31</th><td></td><td></td><td></td><td></td><td></td><td class="h s">助工 计数</td><td>2</td><td></td><td></td><td></td><td></td><td></td><td></td><td></td><td></td><td></td><td></td><td></td></tr>
                    <tr><th>32</th><td></td><td></td><td></td><td></td><td></td><td class="h s">总计数</td><td>25</td><td></td><td></td><td></td><td></td><td></td><td></td><td></td><td></td><td></td><td></td><td></td></tr>
                    <tr class="plain"><th>33</th><td></td><td></td><td></td><td></td><td></td><td></td><td></td><td></td><td></td><td></td><td></td><td></td><td></td><td></td><td></td><td></td><td></td><td class="m">3. 1415926</td></tr>
                    <tr class="plain"><th></th><td></td><td></td><td></td><td></td><td></td><td></td><td></td><td></td><td></td><td></td><td></td><td></td><td></td><td></td><td></td><td></td><td></td><td></td></tr>
                </tbody>
            </table>
            <div class="selection"><i></i></div>
            <div class="mark mark-1"></div>
            <div class="mark mark-2"></div>
            <div class="mark mark-3"></div>
            <div class="mark mark-4"></div>
            <div class="mark mark-5"></div>
            <div class="stamp">
                <svg width="113" height="28" viewBox="0 0 113 28">
                    <circle cx="56" cy="38" r="34" fill="none" stroke="#e8131c" stroke-width="2.500"/>
                    <path id="arc" d="M29 38a27 27 0 0 1 54 0" fill="none"/>
                    <text class="stamp-text"><textPath href="#arc" startOffset="8">有限公司(有限</textPath></text>
                </svg>
            </div>
            <div class="ime">EN<svg width="14" height="16" viewBox="0 0 14 16"><path d="M5 1c6 2 8 8 3 13H2c4-3 5-8 3-13z" fill="none" stroke="#444"/></svg>简</div>
        </div>
        <div class="vscroll">
            <div class="vbtn"><svg width="7" height="4"><path d="M0 4h7L3.500 0z" fill="#777"/></svg></div>
            <div class="vthumb"></div>
            <div class="vbtn"><svg width="7" height="4"><path d="M0 0h7L3.500 4z" fill="#777"/></svg></div>
        </div>
    </div>

    <div class="tabbar">
        <div class="sheets">
            <div class="nav">
                <svg width="5" height="9"><path d="M5 0v9L0 4.500z" fill="#c2c2c2"/></svg>
                <svg width="5" height="9"><path d="M0 0v9l5-4.500z" fill="#c2c2c2"/></svg>
            </div>
            <div class="sheet-tab">成绩表</div>
            <div class="sheet-tab on">员工信息</div>
            <div class="sheet-tab wide1">田字格</div>
            <div class="sheet-tab blue-tab">XXX公司销售额</div>
            <div class="sheet-tab orange-tab">课程表</div>
            <div class="sheet-tab">数据透视表教程</div>
            <div class="sheet-tab wide2">Sheet5</div>
            <div class="sheet-tab wide2">Sheet6</div>
            <svg class="add" width="18" height="18" viewBox="0 0 18 18"><circle cx="9" cy="9" r="8" fill="none" stroke="#808080" stroke-width="1.300"/><path d="M9 4.500v9M4.500 9h9" stroke="#666" stroke-width="1.800"/></svg>
        </div>
        <div class="tabdots"></div>
        <div class="hscroll">
            <div class="hbtn"><svg width="4" height="8"><path d="M4 0v8L0 4z" fill="#555"/></svg></div>
            <div class="hthumb"></div>
            <div class="hbtn end"><svg width="4" height="8"><path d="M0 0v8l4-4z" fill="#555"/></svg></div>
        </div>
    </div>

    <div class="status">
        <span>就绪</span>
        <span class="st2">数字</span>
        <svg class="st-mac" width="13" height="15" viewBox="0 0 13 15"><path d="M0 0h9v5H0zM10 0h3v3h-3zM0 7h2v2H0zM4 7h2v2H4zM8 7h2v2H8zM0 11h2v2H0zM4 11h2v2H4zM8 11h2v2H8z" fill="#666"/></svg>
        <span class="st-count">计数: 5</span>
        <div class="view on"><svg width="14" height="14" viewBox="0 0 14 14"><path d="M.5.500h13v13H.5zM.5 5h13M.5 9.500h13M5 .500v13M9.500 .500v13" fill="none" stroke="#555"/></svg></div>
        <div class="view"><svg width="14" height="14" viewBox="0 0 14 14"><path d="M1.500.500h11v13h-11zM4 4h6M4 7h6M4 10h6" fill="none" stroke="#555"/></svg></div>
        <div class="view"><svg width="14" height="14" viewBox="0 0 14 14"><path d="M.5 13.500V.500h13v13M7 .500v7M.5 7.500h4M9.500 7.500h4" fill="none" stroke="#555"/></svg></div>
        <div class="zoombar">
            <span class="zm"></span>
            <div class="slider"><i></i><b></b></div>
            <span class="zp"></span>
        </div>
        <span class="st-pct">50%</span>
    </div>

    <svg class="cursor" width="14" height="20" viewBox="0 0 14 20"><path d="M1 1v15l4-3.500 2.500 6 2.500-1-2.500-6H13z" fill="#000" stroke="#fff"/></svg>
    <div class="wm">
        <svg width="44" height="40" viewBox="0 0 46 40">
            <path d="M45 1C26 0 6 8 2 22c-2 9 6 16 17 17 7 0 14-2 19-8-8 4-18 5-23 1-6-4-3-12 5-15 5-2 11-1 13 2 1-5-4-8-10-7C12 13 6 20 8 27 5 16 22 5 45 1z" fill="#4a9ad8"/>
            <path d="M18 24c3-4 9-5 14-3 6 3 4 9-4 13 9-2 14-8 11-14-3-5-13-7-20-2-1 2-2 4-1 6z" fill="#7cc36a"/>
            <path d="M19 26c2 2 6 2 9 0-3-1-6-2-9 0z" fill="#e8d24a"/>
        </svg>
        <div class="wm-text">
            <div class="wm-name">极光下载站</div>
            <div class="wm-url">www.xz7.com</div>
        </div>
    </div>
</div>
</body>
</html>
```
FILE: styles.css
```css
* {
    box-sizing: border-box;
}
html, body {
    margin: 0;
    height: 100%;
    overflow: hidden;
}
body {
    font-family: "Open Sans", "Noto Sans CJK SC", sans-serif;
    font-size: 12px;
    color: #444;
    background-color: #e6e6e6;
}
.defs {
    display: block;
    height: 0;
}
.app {
    position: relative;
    width: 1628px;
    border-left: 1px solid #217346;
}

/* title bar and tabs */
.titlebar {
    display: grid;
    grid-template-columns: 1fr auto 1fr;
    align-items: center;
    height: 34px;
    background-color: #217346;
    color: #fff;
}
.title {
    font-size: 12.200px;
    padding-left: 5px;
}
.winctl {
    display: flex;
    justify-content: flex-end;
    gap: 32px;
    padding: 0 7px 3px 0;
}
.tabs {
    display: flex;
    align-items: stretch;
    height: 26px;
    background-color: #217346;
    color: #fff;
}
.tab {
    display: flex;
    align-items: center;
    padding: 0 14.500px;
    line-height: 26px;
    white-space: nowrap;
}
.tab-file {
    width: 61.500px;
    justify-content: center;
    padding: 0 3px 0 0;
}
.tab.active {
    margin: 0 1.500px;
    padding: 0 13px;
    background-color: #f1f1f1;
    color: #217346;
}
.tell {
    display: flex;
    align-items: center;
    gap: 6px;
    margin-left: 14px;
    color: #a9c9b6;
}
.login {
    display: flex;
    align-items: center;
    margin-left: auto;
    margin-right: 10px;
}
.share {
    display: flex;
    align-items: center;
    gap: 3px;
    width: 60px;
    padding: 0 0 2px 6px;
    background-color: #1a5c38;
    margin-bottom: 1px;
}

/* ribbon */
.ribbon {
    position: relative;
    display: flex;
    height: 95px;
    padding-top: 4px;
    background-color: #f1f1f1;
    border-bottom: 1px solid #c6c6c6;
}
.rb-group {
    position: relative;
    display: flex;
    flex-direction: column;
    height: 86px;
    border-right: 1px solid #c6c6c6;
}
.rb-body {
    display: flex;
    height: 72px;
}
.pl1 { padding-left: 1px; }
.pl2 { padding-left: 2px; }
.pl3 { padding-left: 3px; }
.pr5 { padding-right: 5px; }
.rb-title {
    height: 14px;
    padding-top: 1px;
    line-height: 14px;
    text-align: center;
    color: #666;
}
.rb-btn {
    display: flex;
    flex-direction: column;
    align-items: center;
    flex: none;
    padding-top: 2px;
    line-height: 15px;
    white-space: nowrap;
}
.rb-icon {
    height: 32px;
    flex: none;
    margin-bottom: 2px;
}
.rb-caret {
    margin-top: 5px;
}
.cap {
    margin-left: 4px;
    vertical-align: 2px;
}
.w32 { width: 32px; }
.w34 { width: 34px; }
.w36 { width: 36px; }
.w40 { width: 40px; }
.w44 { width: 44px; }
.w48 { width: 48px; }
.w50 { width: 50px; }
.w52 { width: 52px; }
.w54 { width: 54px; }
.w58 { width: 58px; }
.w60 { width: 60px; }
.w62 { width: 62px; }
.w66 { width: 66px; }
.w77 { width: 77px; }
.w79 { width: 79px; }
.w100 { width: 100px; }
.w103 { width: 103px; }
.rb-sep {
    width: 1px;
    height: 56px;
    margin: 3px 0 0 4px;
    background-color: #dcdcdc;
}
.ml9 {
    margin-left: 9px;
}
.rb-col {
    flex: none;
    margin-top: -2px;
}
.rb-row {
    display: flex;
    align-items: center;
    gap: 3px;
    height: 23px;
    white-space: nowrap;
}
.rb-row.tight {
    gap: 0;
}
.off, .rb-row.off {
    color: #a6a6a6;
}
.rb-sort {
    display: flex;
    flex-direction: column;
    gap: 12px;
    width: 28px;
    padding: 9px 0 0 6px;
    flex: none;
}
.launcher {
    position: absolute;
    right: 3px;
    bottom: 1px;
}
.collapse {
    position: absolute;
    right: 1px;
    bottom: 5px;
}
.svg-a { font: 700 12px "Liberation Sans", sans-serif; fill: #fff; }
.svg-l { font: 700 9px "Liberation Sans", sans-serif; }
.svg-m { font: 700 10px "Liberation Sans", sans-serif; }
.blue { fill: #2f75b5; }
.violet { fill: #8e4fb0; }

/* quick access */
.qat {
    display: flex;
    align-items: center;
    height: 43px;
    padding-bottom: 1px;
    background-color: #e6e6e6;
}
.q-save { margin-left: 18px; }
.q-redo { margin-left: 34px; }
.q-undo { margin-left: 26px; }
.q-prev { margin-left: 28px; }
.q-zoom { margin-left: 38px; }

/* formula bar */
.fbar {
    display: flex;
    height: 40px;
    padding: 2px 0 10px 5px;
    background-color: #e6e6e6;
}
.namebox {
    display: flex;
    align-items: center;
    justify-content: space-between;
    width: 123px;
    padding: 0 5px 2px 7px;
    background-color: #fff;
    border: 1px solid #c6c6c6;
    font-size: 14px;
    color: #555;
}
.fdots {
    width: 2px;
    height: 12px;
    margin: 9px 14px 0 15px;
    background-image: linear-gradient(#999 50%, transparent 50%);
    background-size: 2px 4px;
}
.fbtns {
    display: flex;
    align-items: center;
    gap: 22px;
    width: 110px;
    padding: 0 0 0 11px;
    background-color: #fff;
    border: 1px solid #c6c6c6;
}
.fx {
    font: italic 14px "Liberation Serif", serif;
    color: #666;
}
.finput {
    display: flex;
    align-items: center;
    justify-content: flex-end;
    flex: 1;
    margin-left: 4px;
    padding-right: 2px;
    background-color: #fff;
    border: 1px solid #c6c6c6;
    border-right: 0;
}

/* sheet */
.sheet {
    display: flex;
    height: 751px;
    background-color: #e6e6e6;
}
.gutter {
    flex: none;
    width: 32px;
}
.gutter svg {
    display: block;
}
.grid-wrap {
    position: relative;
    width: 1581px;
    flex: none;
    overflow: hidden;
    background-color: #fff;
}
.grid {
    table-layout: fixed;
    width: 1581px;
    border-spacing: 0;
    font-family: "Liberation Sans", "Noto Sans CJK SC", sans-serif;
    font-size: 11px;
    color: #222;
}
.grid thead th {
    height: 10px;
    padding: 0;
    width: 87px;
    background-color: #e6e6e6;
    border-right: 1px solid #b8b8b8;
    border-bottom: 1px solid #8c8c8c;
    font-size: 6px;
    font-weight: 400;
    line-height: 9px;
    color: #777;
}
.grid thead th.corner {
    width: 15px;
    border-right: 0;
}
.grid thead th.sel {
    background-color: #c6c6c6;
}
.grid tbody th {
    height: 23px;
    padding: 0 0 0 3px;
    background-color: #c9c9c9;
    text-align: left;
    vertical-align: bottom;
    font-size: 6px;
    font-weight: 400;
    line-height: 8px;
    color: #777;
}
.grid tr.plain th {
    background-color: #e6e6e6;
}
.grid td {
    height: 23px;
    padding: 2px 0 0;
    border-right: 1px solid #cfcfcf;
    border-bottom: 1px solid #cfcfcf;
    text-align: center;
    line-height: 20px;
    white-space: nowrap;
    overflow: hidden;
}
.grid td.h {
    background-color: #c4c4c4;
    border-bottom-color: #a8a8a8;
    border-right-color: #c4c4c4;
}
.grid td.s {
    font-weight: 500;
    color: #111;
}
.grid td.y {
    background-color: #ff0;
    color: #ff2a00;
}
.grid td.p {
    background-color: #ffc7ce;
    border-color: #ffc7ce;
    color: #9c0006;
}
.grid td.f {
    color: #a8323e;
}
.grid td.m {
    padding-top: 3px;
    font: 10px/19px "Liberation Mono", monospace;
}
.grid td.b {
    font-weight: 700;
    font-size: 11.500px;
}
.grid td.spill {
    padding-left: 57px;
    text-align: left;
    letter-spacing: 0.500px;
}
.grid td.flag {
    background:
        linear-gradient(135deg, #0a7a0a 4px, transparent 4px) left top / 6px 6px no-repeat,
        linear-gradient(#0a7a0a, #0a7a0a) right top / 1px 6px no-repeat;
}
.selection {
    position: absolute;
    left: 449px;
    top: 9px;
    width: 88px;
    height: 715px;
    border: 2px solid #217346;
}
.selection i {
    position: absolute;
    right: -5px;
    bottom: -5px;
    width: 6px;
    height: 6px;
    background-color: #217346;
    border: 1px solid #fff;
    box-sizing: content-box;
}
.mark {
    position: absolute;
    border: 4px solid #f00;
}
.mark-1 { left: 453px; top: 94px; width: 172px; height: 32px; }
.mark-2 { left: 459px; top: 344px; width: 152px; height: 31px; }
.mark-3 { left: 440px; top: 605px; width: 177px; height: 30px; }
.mark-4 { left: 453px; top: 673px; width: 146px; height: 24px; }
.mark-5 { left: 464px; top: 700px; width: 132px; height: 36px; }
.stamp {
    position: absolute;
    left: 1130px;
    top: 723px;
    width: 113px;
    height: 28px;
    background-color: #fff;
}
.stamp svg {
    display: block;
}
.stamp-text {
    font: 10px "Noto Sans CJK SC", sans-serif;
    fill: #e8131c;
}
.ime {
    position: absolute;
    left: 1367px;
    top: 722px;
    display: flex;
    align-items: center;
    gap: 4px;
    height: 25px;
    padding: 0 5px;
    background-color: #fff;
    border-radius: 5px;
    box-shadow: 0 1px 4px rgba(0, 0, 0, 0.5);
    font: 13px "Noto Sans", "Noto Sans CJK SC", sans-serif;
    color: #444;
}
.vscroll {
    display: flex;
    flex-direction: column;
    flex: 1;
    padding: 2px 0 1px 5px;
    border-left: 1px solid #8c8c8c;
    background-color: #e6e6e6;
}
.vbtn {
    display: flex;
    align-items: center;
    justify-content: center;
    height: 13px;
    background-color: #fff;
    border: 1px solid #c6c6c6;
}
.vthumb {
    flex: 1;
    margin: 8px 0 0;
    background-color: #fff;
    border: 1px solid #c6c6c6;
}

/* sheet tabs */
.tabbar {
    display: flex;
    height: 28px;
    background-color: #e6e6e6;
    border-top: 1px solid #a0a0a0;
    border-bottom: 1px solid #c6c6c6;
}
.sheets {
    display: flex;
    align-items: center;
    flex: none;
    width: 975px;
    height: 100%;
}
.nav {
    display: flex;
    align-items: center;
    justify-content: space-around;
    width: 100px;
    padding: 0 12px 0 12px;
    height: 22px;
    border-right: 1px solid #aaa;
}
.sheet-tab {
    display: flex;
    align-items: center;
    height: 22px;
    padding: 0 11.500px 3px;
    border-right: 1px solid #aaa;
    font-size: 13px;
    color: #555;
    white-space: nowrap;
}
.sheet-tab.on {
    height: 26px;
    margin-top: -1px;
    padding: 0 11.500px 1px;
    background-color: #fff;
    border-right: 0;
    border-bottom: 3px solid #217346;
    color: #217346;
}
.sheet-tab.wide1 {
    padding: 0 12px 3px;
}
.sheet-tab.wide2 {
    padding: 0 13px 3px;
}
.blue-tab {
    margin: 0 2px 0 4px;
    background-color: #bdd7ee;
    border-right: 0;
    color: #333;
}
.orange-tab {
    background-color: #f4b183;
    border-right: 0;
    color: #333;
}
.orange-tab + .sheet-tab {
    border-left: 1px solid #aaa;
}
.add {
    margin-left: 33px;
}
.tabdots {
    width: 2px;
    height: 12px;
    margin: 7px 18px 0 4px;
    background-image: linear-gradient(#aaa 50%, transparent 50%);
    background-size: 2px 4px;
}
.hscroll {
    display: flex;
    width: 618px;
    height: 15px;
    margin-top: 7px;
    background-color: #d9d9d9;
}
.hbtn {
    display: flex;
    align-items: center;
    justify-content: center;
    width: 14px;
    background-color: #fff;
    border: 1px solid #a6a6a6;
}
.hbtn.end {
    margin-left: auto;
}
.hthumb {
    width: 114px;
    margin-left: 14px;
    background-color: #fff;
    border: 1px solid #a6a6a6;
}

/* status bar */
.status {
    display: flex;
    align-items: flex-start;
    height: 23px;
    padding: 0 16px 0 7px;
    background-color: #f1f1f1;
    line-height: 20px;
    color: #555;
}
.st2 {
    margin-left: 18px;
}
.st-mac {
    margin: 3px 0 0 18px;
}
.st-count {
    margin-left: auto;
    margin-right: 26px;
}
.view {
    display: flex;
    justify-content: center;
    width: 38px;
    height: 23px;
    padding-top: 3px;
}
.view.on {
    background-color: #d2d2d2;
}
.zoombar {
    display: flex;
    align-items: center;
    gap: 6px;
    height: 15px;
    margin-left: 2px;
    margin-top: 2px;
}
.zm {
    width: 7px;
    height: 2px;
    background-color: #555;
}
.zp {
    width: 8px;
    height: 8px;
    background:
        linear-gradient(#555, #555) center / 8px 2px no-repeat,
        linear-gradient(#555, #555) center / 2px 8px no-repeat;
}
.slider {
    position: relative;
    width: 100px;
    height: 1px;
    background-color: #999;
}
.slider i {
    position: absolute;
    left: 22px;
    top: -6px;
    width: 4px;
    height: 13px;
    background-color: #555;
}
.slider b {
    position: absolute;
    left: 50px;
    top: -2px;
    width: 1px;
    height: 5px;
    background-color: #999;
}
.st-pct {
    margin-left: 13px;
    font-size: 13px;
}

/* things on top of the window */
.cursor {
    position: absolute;
    left: 143px;
    top: 10px;
}
.wm {
    position: absolute;
    left: 1468px;
    top: 979px;
    display: flex;
    gap: 0;
    pointer-events: none;
}
.wm-name {
    font: 700 21px/26px "Noto Sans CJK SC", sans-serif;
    color: #3a8fd8;
    white-space: nowrap;
}
.wm-url {
    margin-top: 4px;
    font: 17px/16px "Liberation Sans", sans-serif;
    color: #52b96f;
}
```
